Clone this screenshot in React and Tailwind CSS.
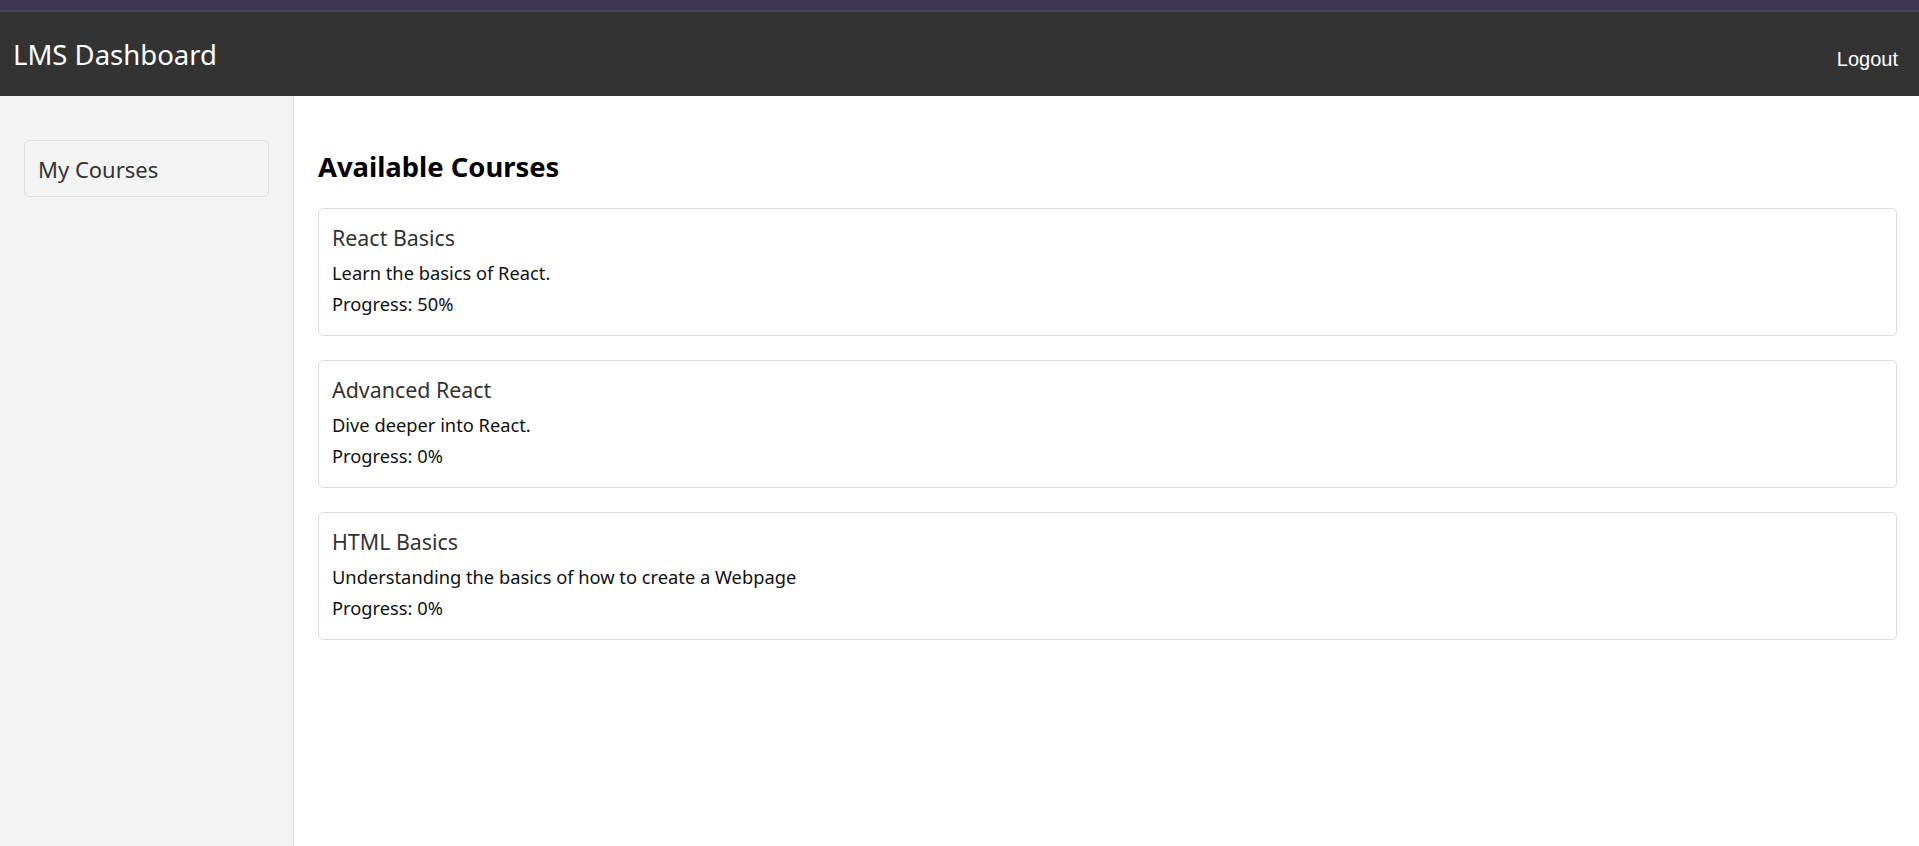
import React from "react";

const courses = [
  { title: "React Basics", desc: "Learn the basics of React.", progress: 50 },
  { title: "Advanced React", desc: "Dive deeper into React.", progress: 0 },
  { title: "HTML Basics", desc: "Understanding the basics of how to create a Webpage", progress: 0 },
];

export default function App() {
  const font = { fontFamily: '"Noto Sans", "Open Sans", sans-serif' };
  return (
    <div className="w-full h-[846px] flex flex-col bg-white overflow-hidden" style={font}>
      <div className="h-[10px] bg-[#3e3550] shrink-0" />
      <header className="h-[86px] shrink-0 bg-[#333333] border-t-2 border-[#4a4a4f] flex items-center justify-between pl-[13px] pr-[21px]">
        <div className="text-white text-[27.5px] leading-[36px] mt-[2px]">LMS Dashboard</div>
        <button className="text-white text-[20px] leading-[24px] mt-[10px]" style={{ fontFamily: '"Liberation Sans", Arial, sans-serif' }}>
          Logout
        </button>
      </header>
      <div className="flex flex-1 min-h-0">
        <aside className="w-[294px] shrink-0 bg-[#f3f3f3] border-r border-[#dddddd] pt-[44px] px-[24px]">
          <div className="border border-[#dddddd] rounded-[5px] pl-[13px] pt-[12px] pb-[11px] text-[22px] leading-[32px] text-[#333333]">
            My Courses
          </div>
        </aside>
        <main className="flex-1 pl-[24px] pr-[22px] pt-[53px]">
          <h2 className="text-[27.4px] leading-[36px] font-bold text-black mb-[23px]">Available Courses</h2>
          <div className="flex flex-col gap-[24px]">
            {courses.map((c) => (
              <div key={c.title} className="border border-[#dddddd] rounded-[5px] pl-[13px] pt-[14px] pb-[16px]">
                <div className="text-[21.4px] leading-[30px] text-[#333333]">{c.title}</div>
                <div className="mt-[4px] text-[18.3px] leading-[31px] text-[#111111]">{c.desc}</div>
                <div className="text-[18.3px] leading-[31px] text-[#111111]">Progress: {c.progress}%</div>
              </div>
            ))}
          </div>
        </main>
      </div>
    </div>
  );
}
